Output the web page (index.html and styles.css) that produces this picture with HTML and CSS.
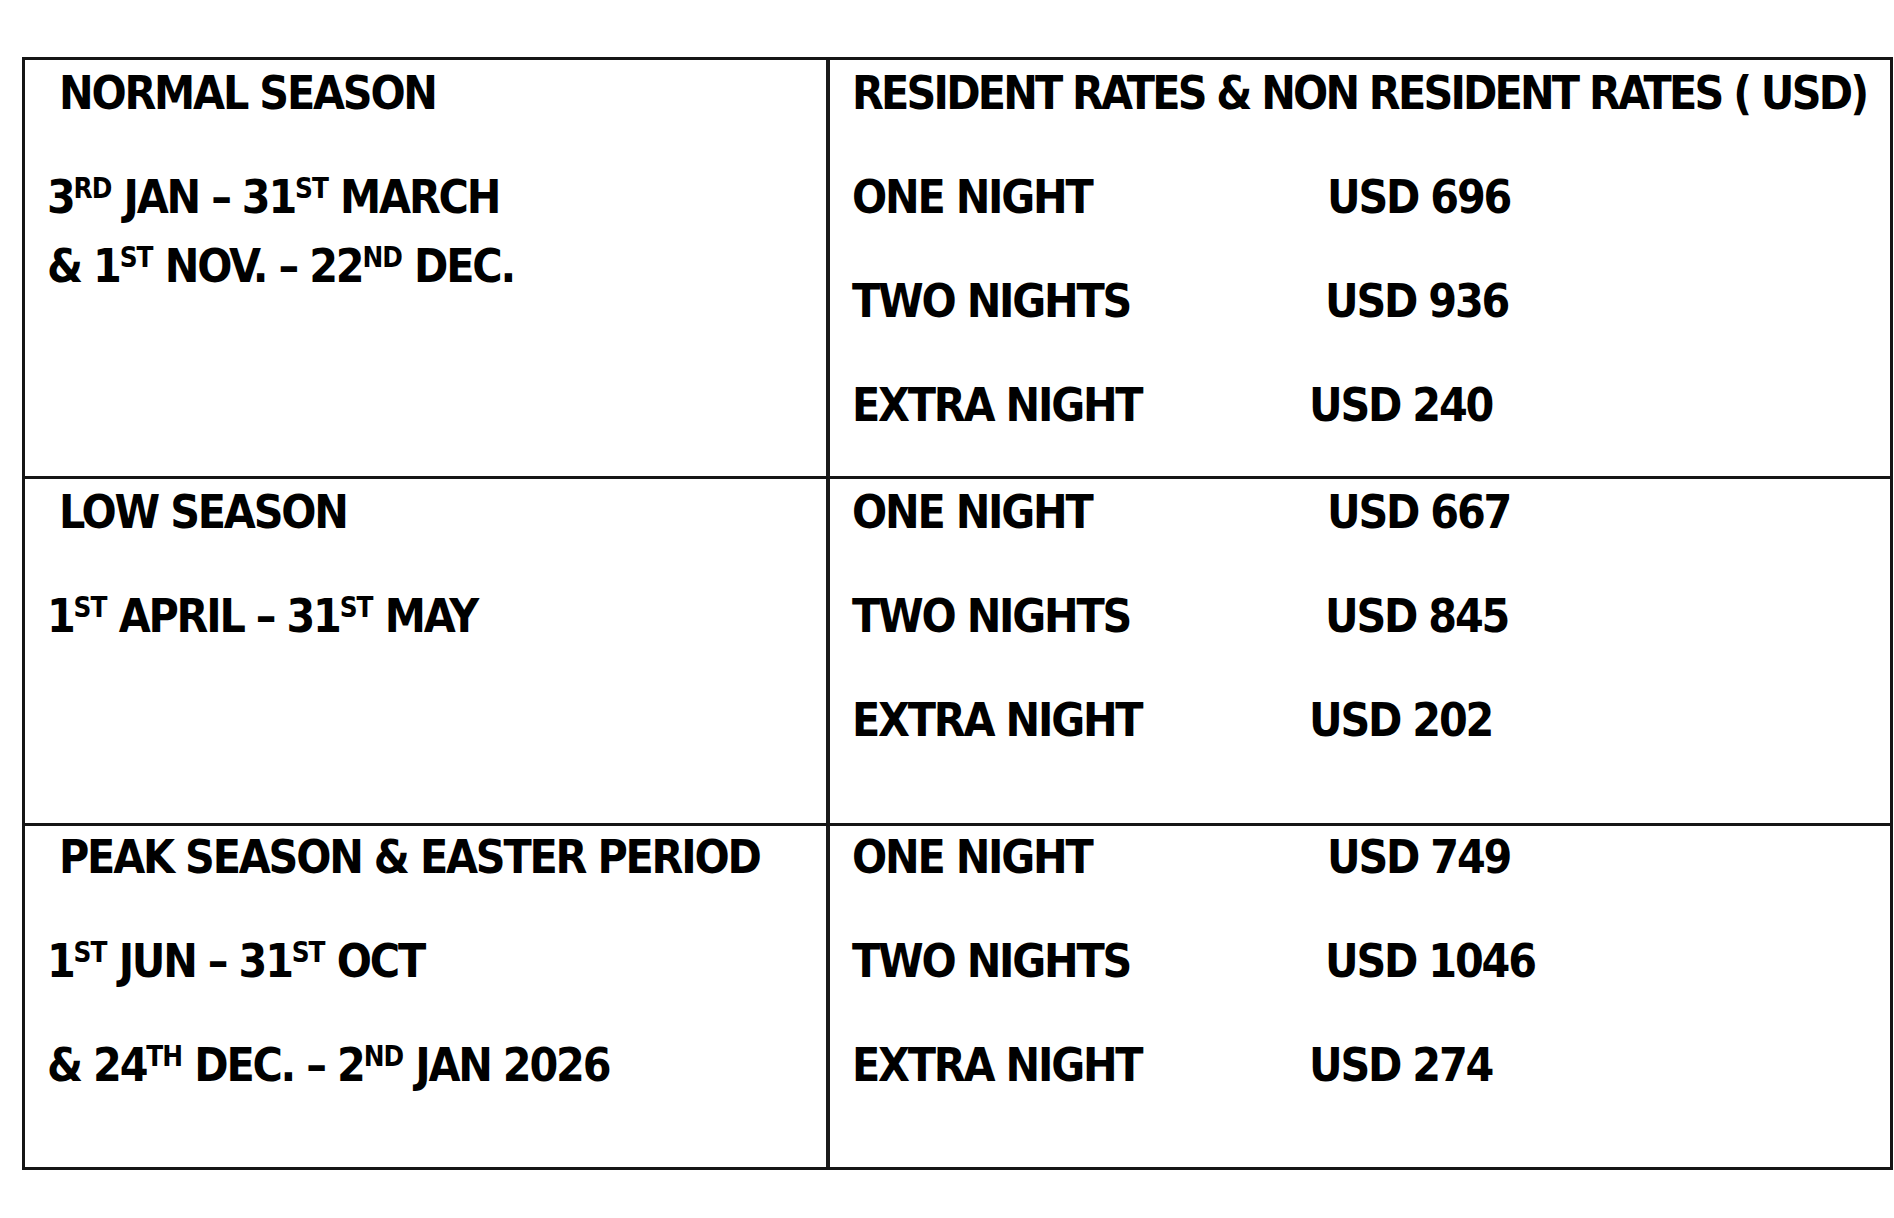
FILE: index.html
```html
<!DOCTYPE html>
<html lang="en">
<head>
<meta charset="utf-8">
<title>Rates</title>
<link rel="stylesheet" href="styles.css">
</head>
<body>
<div class="rates">
  <div class="cell season row1">
    <div class="title">NORMAL SEASON</div>
    <div class="line">3<sup>RD</sup> JAN – 31<sup>ST</sup> MARCH</div>
    <div class="line tight">&amp; 1<sup>ST</sup> NOV. – 22<sup>ND</sup> DEC.</div>
  </div>
  <div class="cell prices row1">
    <div class="title-r">RESIDENT RATES &amp; NON RESIDENT RATES ( USD)</div>
    <div class="line"><span class="lab one">ONE NIGHT</span><span>USD 696</span></div>
    <div class="line"><span class="lab two">TWO NIGHTS</span><span>USD 936</span></div>
    <div class="line"><span class="lab extra">EXTRA NIGHT</span><span>USD 240</span></div>
  </div>
  <div class="cell season row2">
    <div class="title">LOW SEASON</div>
    <div class="line">1<sup>ST</sup> APRIL – 31<sup>ST</sup> MAY</div>
  </div>
  <div class="cell prices row2">
    <div class="line start"><span class="lab one">ONE NIGHT</span><span>USD 667</span></div>
    <div class="line"><span class="lab two">TWO NIGHTS</span><span>USD 845</span></div>
    <div class="line"><span class="lab extra">EXTRA NIGHT</span><span>USD 202</span></div>
  </div>
  <div class="cell season row3">
    <div class="title">PEAK SEASON &amp; EASTER PERIOD</div>
    <div class="line">1<sup>ST</sup> JUN – 31<sup>ST</sup> OCT</div>
    <div class="line">&amp; 24<sup>TH</sup> DEC. – 2<sup>ND</sup> JAN 2026</div>
  </div>
  <div class="cell prices row3">
    <div class="line start"><span class="lab one">ONE NIGHT</span><span>USD 749</span></div>
    <div class="line"><span class="lab two">TWO NIGHTS</span><span>USD 1046</span></div>
    <div class="line"><span class="lab extra">EXTRA NIGHT</span><span>USD 274</span></div>
  </div>
</div>
</body>
</html>
```
FILE: styles.css
```css
* { box-sizing: border-box; }
html, body { margin: 0; padding: 0; background: #ffffff; }
body {
  font-family: "Liberation Sans Narrow", "Arial Narrow", "DejaVu Sans Condensed", "Liberation Sans", sans-serif;
  font-stretch: condensed;
  font-weight: bold;
  color: #000;
  font-size: 46px;
  letter-spacing: -2.2px;
  line-height: 62px;
}
.rates {
  margin: 57px 0 0 22px;
  width: 1871px;
  border: 3px solid #151515;
  display: grid;
  grid-template-columns: 805px 1fr;
  grid-template-rows: 419px 347px 341px;
}
.cell { white-space: nowrap; padding-top: 2px; }
.season { border-right: 4px solid #1a1a1a; padding-left: 22px; }
.prices { padding-left: 22px; }
.row1, .row2 { border-bottom: 3px solid #151515; }
.row3 { padding-top: 0; }
.title { padding-left: 12px; }
.title-r { letter-spacing: -2.8px; }
.line { margin-top: 42px; }
.line.start { margin-top: 0; }
.line.tight { margin-top: 7px; }
.lab { display: inline-block; }
.lab.one { width: 475px; }
.lab.two { width: 473px; }
.lab.extra { width: 457px; }
sup {
  font-size: 0.6em;
  line-height: 0;
  letter-spacing: -1px;
  vertical-align: 0.55em;
}
```
